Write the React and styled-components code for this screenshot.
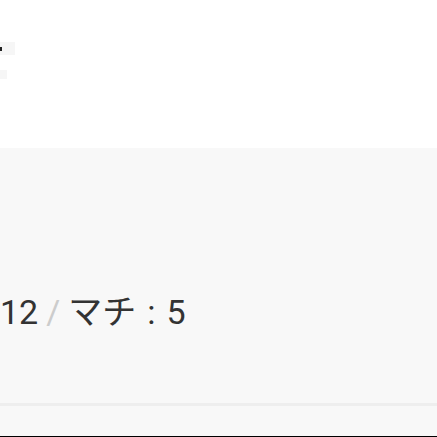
import React from "react";
import styled, { createGlobalStyle } from "styled-components";

const GlobalStyle = createGlobalStyle`
  html, body {
    margin: 0;
    padding: 0;
    background: #ffffff;
  }
  body {
    font-family: Roboto, "Noto Sans CJK JP", "Noto Sans", sans-serif;
    color: #333333;
  }
`;

const Page = styled.div`
  width: 437px;
  height: 437px;
  overflow: hidden;
  display: flex;
  flex-direction: column;
`;

const Header = styled.div`
  height: 148px;
  background: #ffffff;
  display: flex;
  flex-direction: column;
  gap: 15px;
  padding-top: 42px;
  box-sizing: border-box;
`;

const Chip = styled.div`
  width: ${(p) => p.w}px;
  height: ${(p) => p.h}px;
  background: #f6f6f6;
  display: flex;
  align-items: center;
`;

const Mark = styled.span`
  width: 2px;
  height: 4px;
  background: #222;
`;

const Info = styled.div`
  flex: 1;
  background: #f8f8f8;
  display: flex;
  flex-direction: column;
`;

const SizeLine = styled.div`
  margin-top: 144px;
  font-size: 34px;
  line-height: 40px;
  white-space: nowrap;
`;

const Slash = styled.span`
  color: #cccccc;
  margin: 0 8px 0 8px;
`;

const Colon = styled.span`
  padding: 0 11px;
`;

const Divider = styled.div`
  margin-top: 71px;
  height: 3px;
  background: #eeeeee;
`;

const Bottom = styled.div`
  margin-top: auto;
  height: 1px;
  background: #000;
`;

export default function App() {
  return (
    <>
      <GlobalStyle />
      <Page>
        <Header>
          <Chip w={15} h={13}>
            <Mark />
          </Chip>
          <Chip w={7} h={9} />
        </Header>
        <Info>
          <SizeLine>
            12<Slash>/</Slash>マチ<Colon>:</Colon>5
          </SizeLine>
          <Divider />
          <Bottom />
        </Info>
      </Page>
    </>
  );
}
